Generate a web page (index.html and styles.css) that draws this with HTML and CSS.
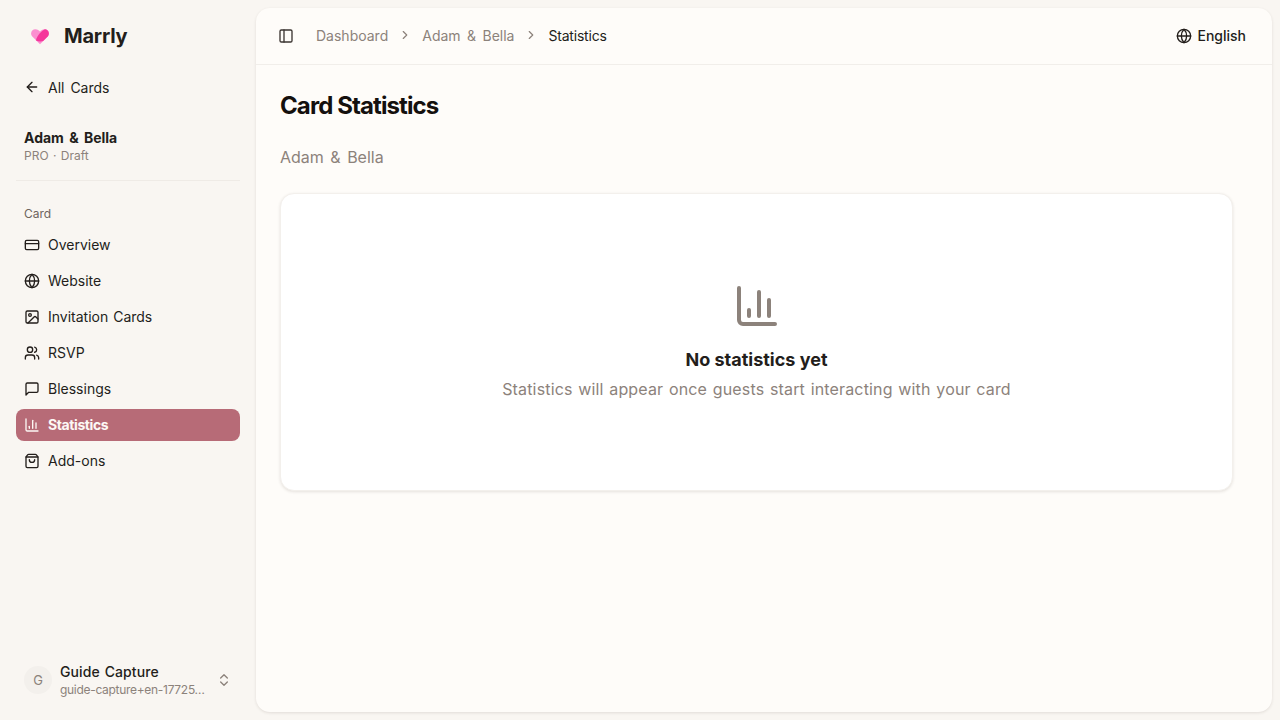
FILE: index.html
```html
<!DOCTYPE html>
<html lang="en">
<head>
    <meta charset="UTF-8">
    <meta name="viewport" content="width=device-width, initial-scale=1.0">
    <title>Card Statistics</title>
    <link rel="stylesheet" href="styles.css">
</head>
<body>
    <aside class="sidebar">
        <div class="brand">
            <svg class="brand-logo" width="22" height="22" viewBox="0 0 24 24">
                <path fill="#fb8fd0" d="M12 21 L3.6 12.6 C1.2 10 2.2 5 6.6 4.6 C9 4.4 10.800 5.600 12 7.200 C13.200 5.600 15 4.400 17.400 4.600 C21.800 5 22.800 10 20.400 12.600 Z"/>
                <path fill="#f5379b" d="M7.500 16.900 C9 11 13.500 6.500 17.400 4.600 C21.800 5 22.800 10 20.400 12.600 L15.500 17.500 C13 18.300 10 18 7.500 16.900 Z"/>
            </svg>
            <span class="brand-name">Marrly</span>
        </div>

        <a class="back-link">
            <svg class="icon" viewBox="0 0 24 24"><path d="m12 19-7-7 7-7"/><path d="M19 12H5"/></svg>
            <span>All Cards</span>
        </a>

        <div class="card-info">
            <div class="card-name">Adam &amp; Bella</div>
            <div class="card-meta">PRO · Draft</div>
        </div>

        <div class="nav-label">Card</div>
        <nav class="nav">
            <a class="nav-item">
                <svg class="icon" viewBox="0 0 24 24"><rect x="2" y="5" width="20" height="14" rx="2"/><path d="M2 10h20"/></svg>
                <span>Overview</span>
            </a>
            <a class="nav-item">
                <svg class="icon" viewBox="0 0 24 24"><circle cx="12" cy="12" r="10"/><path d="M12 2a14.500 14.500 0 0 0 0 20 14.500 14.500 0 0 0 0-20"/><path d="M2 12h20"/></svg>
                <span>Website</span>
            </a>
            <a class="nav-item">
                <svg class="icon" viewBox="0 0 24 24"><rect x="3" y="3" width="18" height="18" rx="2"/><circle cx="9" cy="9" r="2"/><path d="m21 15-3.086-3.086a2 2 0 0 0-2.828 0L6 21"/></svg>
                <span>Invitation Cards</span>
            </a>
            <a class="nav-item">
                <svg class="icon" viewBox="0 0 24 24"><path d="M16 21v-2a4 4 0 0 0-4-4H6a4 4 0 0 0-4 4v2"/><circle cx="9" cy="7" r="4"/><path d="M22 21v-2a4 4 0 0 0-3-3.870"/><path d="M16 3.130a4 4 0 0 1 0 7.750"/></svg>
                <span>RSVP</span>
            </a>
            <a class="nav-item">
                <svg class="icon" viewBox="0 0 24 24"><path d="M21 15a2 2 0 0 1-2 2H7l-4 4V5a2 2 0 0 1 2-2h14a2 2 0 0 1 2 2z"/></svg>
                <span>Blessings</span>
            </a>
            <a class="nav-item active">
                <svg class="icon" viewBox="0 0 24 24"><path d="M3 3v16a2 2 0 0 0 2 2h16"/><path d="M8 17v-3"/><path d="M13 17V5"/><path d="M18 17V9"/></svg>
                <span>Statistics</span>
            </a>
            <a class="nav-item">
                <svg class="icon" viewBox="0 0 24 24"><path d="M16 10a4 4 0 0 1-8 0"/><path d="M3.103 6.034h17.794"/><path d="M3.400 5.467a2 2 0 0 0-.4 1.200V20a2 2 0 0 0 2 2h14a2 2 0 0 0 2-2V6.667a2 2 0 0 0-.4-1.200l-2-2.667A2 2 0 0 0 17 2H7a2 2 0 0 0-1.600.8z"/></svg>
                <span>Add-ons</span>
            </a>
        </nav>

        <div class="user">
            <div class="avatar">G</div>
            <div class="user-text">
                <div class="user-name">Guide Capture</div>
                <div class="user-email">guide-capture+en-17725…</div>
            </div>
            <svg class="icon chevrons" viewBox="0 0 24 24"><path d="m7 15 5 5 5-5"/><path d="m7 9 5-5 5 5"/></svg>
        </div>
    </aside>

    <main class="main">
        <header class="topbar">
            <svg class="icon toggle" viewBox="0 0 24 24"><rect x="3" y="3" width="18" height="18" rx="2"/><path d="M9 3v18"/></svg>
            <div class="crumbs">
                <span class="crumb">Dashboard</span>
                <svg class="icon sep" viewBox="0 0 24 24"><path d="m9 18 6-6-6-6"/></svg>
                <span class="crumb">Adam &amp; Bella</span>
                <svg class="icon sep" viewBox="0 0 24 24"><path d="m9 18 6-6-6-6"/></svg>
                <span class="crumb current">Statistics</span>
            </div>
            <div class="lang">
                <svg class="icon" viewBox="0 0 24 24"><circle cx="12" cy="12" r="10"/><path d="M12 2a14.500 14.500 0 0 0 0 20 14.500 14.500 0 0 0 0-20"/><path d="M2 12h20"/></svg>
                <span>English</span>
            </div>
        </header>

        <section class="content">
            <h1 class="title">Card Statistics</h1>
            <p class="subtitle">Adam &amp; Bella</p>
            <div class="empty-card">
                <svg class="empty-icon" viewBox="0 0 24 24"><path d="M3 3v16a2 2 0 0 0 2 2h16"/><path d="M8 17v-3"/><path d="M13 17V5"/><path d="M18 17V9"/></svg>
                <h3 class="empty-title">No statistics yet</h3>
                <p class="empty-text">Statistics will appear once guests start interacting with your card</p>
            </div>
        </section>
    </main>
</body>
</html>
```

FILE: styles.css
```css
* {
    box-sizing: border-box;
}
html, body {
    height: 100%;
}
body {
    margin: 0;
    display: flex;
    height: 720px;
    overflow: hidden;
    background-color: #f9f6f2;
    color: #231e1b;
    font-family: Inter, sans-serif;
    font-size: 14px;
}

.icon {
    width: 16px;
    height: 16px;
    flex-shrink: 0;
    fill: none;
    stroke: currentColor;
    stroke-width: 2;
    stroke-linecap: round;
    stroke-linejoin: round;
}

/* sidebar */
.sidebar {
    width: 256px;
    flex-shrink: 0;
    display: flex;
    flex-direction: column;
    padding: 0 16px;
}
.brand {
    display: flex;
    align-items: center;
    gap: 13px;
    height: 36px;
    margin-top: 18px;
    padding-left: 13px;
}
.brand-name {
    font-size: 20px;
    font-weight: 700;
    letter-spacing: -0.2px;
}
.back-link {
    display: flex;
    align-items: center;
    gap: 8px;
    height: 32px;
    margin-top: 17px;
    padding-left: 8px;
    word-spacing: 2px;
}
.card-info {
    margin-top: 25px;
    padding: 0 8px 16px;
    border-bottom: 1px solid #efebe6;
}
.card-name {
    font-weight: 700;
    line-height: 20px;
    word-spacing: 2px;
}
.card-meta {
    font-size: 12px;
    line-height: 16px;
    color: #8c827b;
    word-spacing: 1px;
}
.nav-label {
    margin-top: 25px;
    padding-left: 8px;
    font-size: 12px;
    line-height: 16px;
    color: #6e645e;
}
.nav {
    display: flex;
    flex-direction: column;
    gap: 4px;
    margin-top: 7px;
}
.nav-item {
    display: flex;
    align-items: center;
    gap: 8px;
    height: 32px;
    padding-left: 8px;
    border-radius: 8px;
    word-spacing: 1px;
}
.nav-item span {
    padding-bottom: 2px;
}
.nav-item.active {
    background-color: #b76b77;
    color: #fdf8f5;
    font-weight: 700;
    letter-spacing: -0.4px;
}
.user {
    display: flex;
    align-items: center;
    gap: 8px;
    margin-top: auto;
    margin-bottom: 22px;
    padding-left: 8px;
}
.avatar {
    width: 28px;
    height: 28px;
    flex-shrink: 0;
    border-radius: 50%;
    background-color: #f3f0ec;
    color: #8c827b;
    font-size: 13px;
    display: flex;
    align-items: center;
    justify-content: center;
}
.user-text {
    width: 146px;
    margin-right: 2px;
}
.user-name {
    font-weight: 500;
    line-height: 20px;
    letter-spacing: 0.1px;
    word-spacing: 1px;
}
.user-email {
    font-size: 12px;
    line-height: 16px;
    color: #8c827b;
    white-space: nowrap;
    letter-spacing: -0.3px;
}
.chevrons {
    color: #8c827b;
}

/* main panel */
.main {
    flex: 1;
    margin: 8px 8px 8px 0;
    background-color: #fefcf9;
    border-radius: 14px;
    box-shadow: 0 1px 3px rgba(60, 40, 30, 0.12);
}
.topbar {
    display: flex;
    align-items: center;
    height: 57px;
    padding: 0 26px 0 22px;
    border-bottom: 1px solid #f1eeea;
}
.toggle {
    color: #3b3532;
}
.crumbs {
    display: flex;
    align-items: center;
    gap: 10px;
    margin-left: 22px;
    margin-bottom: 2px;
    word-spacing: 2.500px;
}
.crumb {
    color: #8c827b;
}
.crumb.current {
    color: #231e1b;
    letter-spacing: -0.2px;
}
.sep {
    width: 14px;
    height: 14px;
    color: #8c827b;
}
.lang {
    display: flex;
    align-items: center;
    gap: 5px;
    margin-left: auto;
    font-weight: 500;
}
.lang span {
    padding-bottom: 2px;
}
.content {
    padding: 25px 39px 24px 24px;
}
.title {
    margin: 0;
    font-size: 24px;
    line-height: 32px;
    font-weight: 700;
    color: #14100e;
    letter-spacing: -0.9px;
}
.subtitle {
    margin: 23px 0 0;
    font-size: 16px;
    line-height: 24px;
    color: #8c827b;
    word-spacing: 2px;
}
.empty-card {
    margin-top: 24px;
    height: 298px;
    background-color: #fff;
    border: 1px solid #f3f0ec;
    border-radius: 14px;
    box-shadow: 0 1px 3px rgba(60, 40, 30, 0.12);
    display: flex;
    flex-direction: column;
    align-items: center;
    padding-top: 88px;
}
.empty-icon {
    width: 48px;
    height: 48px;
    fill: none;
    stroke: #8c827b;
    stroke-width: 2;
    stroke-linecap: round;
    stroke-linejoin: round;
}
.empty-title {
    margin: 16px 0 0;
    font-size: 18px;
    line-height: 28px;
    font-weight: 700;
}
.empty-text {
    margin: 3px 0 0;
    font-size: 16px;
    line-height: 24px;
    color: #8c827b;
    word-spacing: 1px;
    letter-spacing: 0.16px;
}
```
